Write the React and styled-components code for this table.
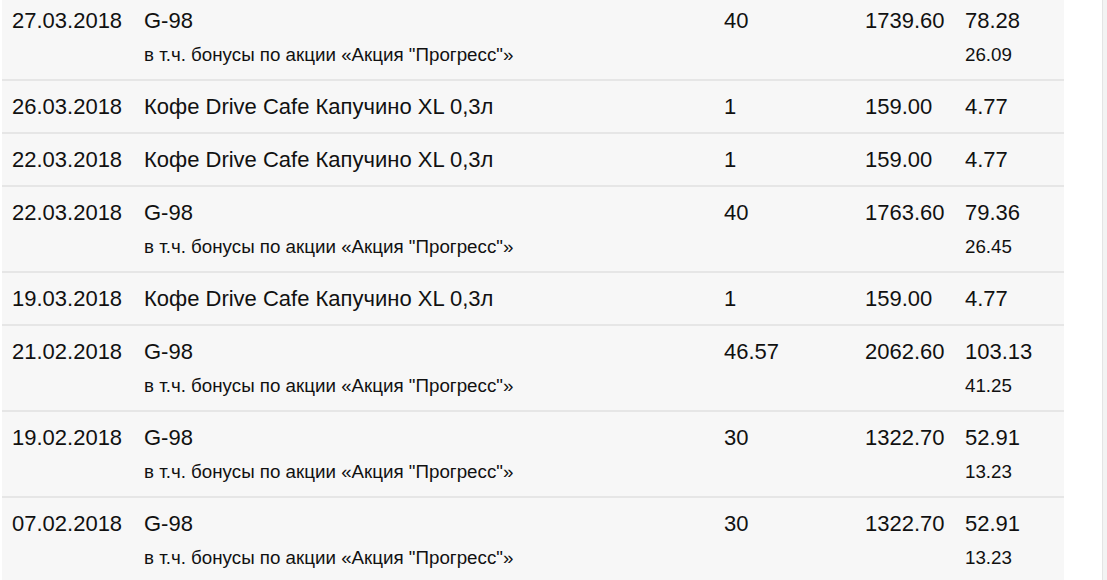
import React from "react";
import styled, { createGlobalStyle } from "styled-components";

const Global = createGlobalStyle`
  html, body { margin: 0; padding: 0; background: #ffffff; }
  body { font-family: "Liberation Sans", Arial, sans-serif; color: #111; overflow: hidden; }
`;

const Page = styled.div`
  display: flex;
  width: 1107px;
  height: 580px;
  overflow: hidden;
`;

const Content = styled.div`
  flex: 1;
  padding-left: 2px;
`;

const Scroll = styled.div`
  width: 4px;
  border-left: 1px solid #e4e4e4;
  background: #f3f3f3;
`;

const Table = styled.div`
  width: 1062px;
  margin-top: -5px;
  display: flex;
  flex-direction: column;
  gap: 2px;
  background: #e6e6e6;
`;

const Row = styled.div`
  display: grid;
  grid-template-columns: 132px 580px 141px 100px 1fr;
  padding: 13px 0 12px 10px;
  background: #f7f7f7;
`;

const Cell = styled.div`
  display: flex;
  flex-direction: column;
`;

const Main = styled.div`
  font-size: 22px;
  line-height: 26px;
  white-space: nowrap;
`;

const Sub = styled.div`
  margin: 9px 0 1px;
  font-size: 18.75px;
  line-height: 23px;
  white-space: nowrap;
`;

const rows = [
  { d: "27.03.2018", n: "G-98", q: "40", p: "1739.60", b: "78.28", s: "26.09" },
  { d: "26.03.2018", n: "Кофе Drive Cafe Капучино XL 0,3л", q: "1", p: "159.00", b: "4.77" },
  { d: "22.03.2018", n: "Кофе Drive Cafe Капучино XL 0,3л", q: "1", p: "159.00", b: "4.77" },
  { d: "22.03.2018", n: "G-98", q: "40", p: "1763.60", b: "79.36", s: "26.45" },
  { d: "19.03.2018", n: "Кофе Drive Cafe Капучино XL 0,3л", q: "1", p: "159.00", b: "4.77" },
  { d: "21.02.2018", n: "G-98", q: "46.57", p: "2062.60", b: "103.13", s: "41.25" },
  { d: "19.02.2018", n: "G-98", q: "30", p: "1322.70", b: "52.91", s: "13.23" },
  { d: "07.02.2018", n: "G-98", q: "30", p: "1322.70", b: "52.91", s: "13.23" },
];

const promo = "в т.ч. бонусы по акции «Акция \"Прогресс\"»";

export default function App() {
  return (
    <>
      <Global />
      <Page>
        <Content>
          <Table>
            {rows.map((r, i) => (
              <Row key={i}>
                <Cell><Main>{r.d}</Main></Cell>
                <Cell>
                  <Main>{r.n}</Main>
                  {r.s && <Sub>{promo}</Sub>}
                </Cell>
                <Cell><Main>{r.q}</Main></Cell>
                <Cell><Main>{r.p}</Main></Cell>
                <Cell>
                  <Main>{r.b}</Main>
                  {r.s && <Sub>{r.s}</Sub>}
                </Cell>
              </Row>
            ))}
          </Table>
        </Content>
        <Scroll />
      </Page>
    </>
  );
}
